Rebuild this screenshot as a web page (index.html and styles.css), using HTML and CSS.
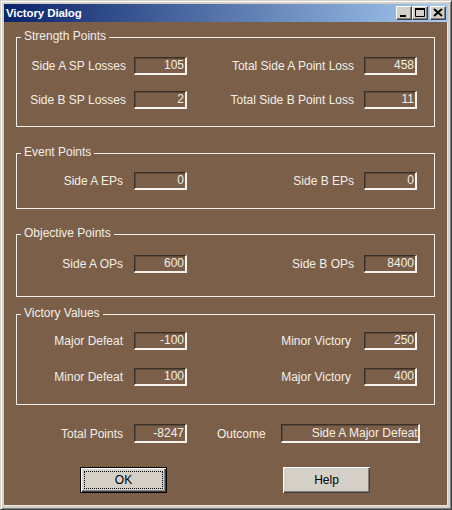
FILE: index.html
```html
<!DOCTYPE html>
<html>
<head>
<meta charset="utf-8">
<title>Victory Dialog</title>
<link rel="stylesheet" href="styles.css">
</head>
<body>
<div class="window">
  <div class="titlebar">
    <span class="title">Victory Dialog</span>
    <div class="tbtns">
      <span class="tbtn"><svg width="14" height="12" viewBox="0 0 14 12"><rect x="3" y="8" width="6" height="2" fill="#000"/></svg></span>
      <span class="tbtn"><svg width="14" height="12" viewBox="0 0 14 12"><path d="M2.5 1.5h9v8h-9z" fill="none" stroke="#000"/><rect x="2" y="1" width="10" height="2" fill="#000"/></svg></span>
      <span class="tbtn close"><svg width="14" height="12" viewBox="0 0 14 12"><path d="M3 2l8 7M11 2l-8 7" stroke="#000" stroke-width="2"/></svg></span>
    </div>
  </div>
  <div class="client">
    <div class="group g-sp">
      <span class="caption">Strength Points</span>
      <div class="grid">
        <span class="lbl">Side A SP Losses</span><span class="field">105</span>
        <span class="lbl r">Total Side A Point Loss</span><span class="field">458</span>
        <span class="lbl">Side B SP Losses</span><span class="field">2</span>
        <span class="lbl r">Total Side B Point Loss</span><span class="field">11</span>
      </div>
    </div>
    <div class="group g-ep">
      <span class="caption">Event Points</span>
      <div class="grid">
        <span class="lbl">Side A EPs</span><span class="field">0</span>
        <span class="lbl r">Side B EPs</span><span class="field">0</span>
      </div>
    </div>
    <div class="group g-op">
      <span class="caption">Objective Points</span>
      <div class="grid">
        <span class="lbl">Side A OPs</span><span class="field">600</span>
        <span class="lbl r">Side B OPs</span><span class="field">8400</span>
      </div>
    </div>
    <div class="group g-vv">
      <span class="caption">Victory Values</span>
      <div class="grid">
        <span class="lbl">Major Defeat</span><span class="field">-100</span>
        <span class="lbl r">Minor Victory</span><span class="field">250</span>
        <span class="lbl">Minor Defeat</span><span class="field">100</span>
        <span class="lbl r">Major Victory</span><span class="field">400</span>
      </div>
    </div>
    <div class="totals">
      <span class="lbl tot-lbl">Total Points</span>
      <span class="field">-8247</span>
      <span class="lbl out-lbl">Outcome</span>
      <span class="field outcome">Side A Major Defeat</span>
    </div>
    <div class="buttons">
      <button class="btn ok"><span class="focus">OK</span></button>
      <button class="btn help"><span class="nofocus">Help</span></button>
    </div>
  </div>
</div>
</body>
</html>
```
FILE: styles.css
```css
html, body {
  margin: 0;
  padding: 0;
  background: #d4d0c8;
}
.window {
  width: 452px;
  height: 510px;
  box-sizing: border-box;
  background: #d4d0c8;
  border: 1px solid;
  border-color: #d4d0c8 #404040 #404040 #d4d0c8;
  box-shadow: inset 1px 1px #ffffff, inset -1px -1px #808080;
  padding: 3px;
  display: flex;
  flex-direction: column;
  font-family: "Liberation Sans", Arial, sans-serif;
  font-size: 12px;
}
.titlebar {
  height: 18px;
  flex: none;
  display: flex;
  align-items: center;
  justify-content: space-between;
  background: linear-gradient(to right, #0a246a, #a6caf0);
  padding-left: 2px;
  padding-right: 2px;
}
.title {
  color: #ffffff;
  font-weight: bold;
  font-size: 11.5px;
  letter-spacing: -0.1px;
}
.tbtns {
  display: flex;
  align-items: center;
}
.tbtn {
  width: 16px;
  height: 14px;
  box-sizing: border-box;
  background: #d4d0c8;
  border: 1px solid;
  border-color: #ffffff #404040 #404040 #ffffff;
  box-shadow: inset -1px -1px #808080;
  display: flex;
}
.tbtn svg {
  display: block;
}
.tbtn.close {
  margin-left: 2px;
}
.client {
  flex: 1;
  background: #7b5f48;
  border-right: 1px solid #ebe7e0;
  border-bottom: 1px solid #ebe7e0;
  display: flex;
  flex-direction: column;
  color: #f3efe8;
}
.group {
  position: relative;
  box-sizing: border-box;
  width: 419px;
  margin-left: 12px;
  border: 1px solid #f1eee9;
}
.caption {
  position: absolute;
  top: -9px;
  left: 4px;
  padding: 0 3px;
  line-height: 14px;
  background: #7b5f48;
  white-space: nowrap;
}
.grid {
  display: grid;
  grid-template-columns: 117px 53px 177px 53px;
  align-items: center;
}
.lbl {
  text-align: right;
  padding-right: 11px;
  white-space: nowrap;
  line-height: 18px;
}
.lbl.r {
  padding-right: 10px;
}
.field {
  box-sizing: border-box;
  height: 18px;
  border-style: solid;
  border-width: 1px 2px 2px 1px;
  border-color: #3a2f26 #f6f3ee #f6f3ee #3a2f26;
  box-shadow: inset 1px 1px #5e4a3a;
  text-align: right;
  padding-right: 1px;
  line-height: 15px;
  white-space: nowrap;
  overflow: hidden;
}
.g-sp {
  margin-top: 15px;
  padding: 19px 0 17px;
}
.g-sp .grid {
  row-gap: 16px;
}
.g-sp .lbl {
  padding-right: 8px;
}
.g-sp .lbl.r {
  padding-right: 10px;
}
.g-ep {
  margin-top: 26px;
  padding: 18px 0 18px;
}
.g-op {
  margin-top: 25px;
  padding: 20px 0 23px;
}
.g-vv {
  margin-top: 17px;
  padding: 17px 0 18px;
}
.g-vv .grid {
  row-gap: 18px;
}
.g-vv .lbl.r {
  padding-right: 13px;
}
.totals {
  display: flex;
  align-items: center;
  margin-top: 19px;
  height: 19px;
}
.totals .field {
  width: 53px;
  height: 19px;
  line-height: 16px;
}
.tot-lbl {
  width: 130px;
  box-sizing: border-box;
}
.out-lbl {
  margin-left: 30px;
  padding-right: 0;
}
.totals .field.outcome {
  width: 139px;
  margin-left: 15px;
  padding-right: 0;
}
.buttons {
  display: flex;
  margin-top: 24px;
}
.btn {
  width: 87px;
  height: 26px;
  box-sizing: border-box;
  background: #d4d0c8;
  font-family: "Liberation Sans", Arial, sans-serif;
  font-size: 12px;
  color: #000000;
  padding: 3px;
  margin: 0;
  display: flex;
}
.ok {
  margin-left: 76px;
  border: 1px solid #000000;
  box-shadow: inset 1px 1px #ffffff, inset -1px -1px #404040, inset -2px -2px #808080;
}
.help {
  margin-left: 116px;
  border: none;
  box-shadow: inset 1px 1px #ffffff, inset -1px -1px #404040, inset -2px -2px #808080;
}
.focus, .nofocus {
  flex: 1;
  display: flex;
  align-items: center;
  justify-content: center;
  border: 1px dotted transparent;
}
.focus {
  border-color: #000000;
}
```
